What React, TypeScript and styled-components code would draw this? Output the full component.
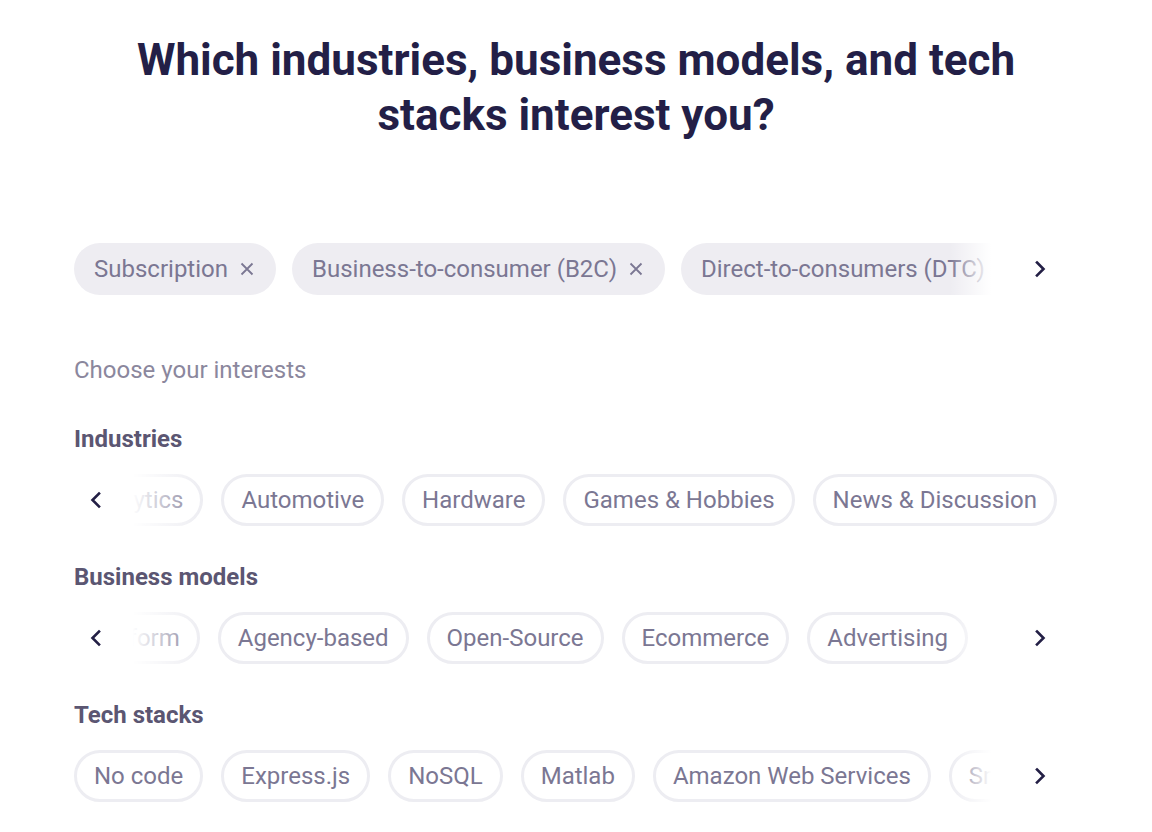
import styled, { createGlobalStyle } from "styled-components";

const GlobalStyle = createGlobalStyle`
  body {
    margin: 0;
    background: #ffffff;
    font-family: Roboto, "Liberation Sans", sans-serif;
  }
`;

const selected = ["Subscription", "Business-to-consumer (B2C)", "Direct-to-consumers (DTC)", "Marketplace"];

const groups = [
  {
    title: "Industries",
    items: ["Analytics", "Automotive", "Hardware", "Games & Hobbies", "News & Discussion"],
    align: "end",
    endGap: 1,
    left: true,
    right: false,
  },
  {
    title: "Business models",
    items: ["Platform", "Agency-based", "Open-Source", "Ecommerce", "Advertising"],
    align: "end",
    endGap: 90,
    left: true,
    right: true,
  },
  {
    title: "Tech stacks",
    items: ["No code", "Express.js", "NoSQL", "Matlab", "Amazon Web Services", "Smart contracts"],
    align: "start",
    endGap: 0,
    left: false,
    right: true,
  },
];

function Chevron({ dir }: { dir: "left" | "right" }) {
  return (
    <svg width="12" height="18" viewBox="0 0 12 18" fill="none">
      <path
        d={dir === "right" ? "M3 2.5 L9.5 9 L3 15.5" : "M9 2.5 L2.5 9 L9 15.5"}
        stroke="#231f45"
        strokeWidth="2.6"
        strokeLinecap="square"
      />
    </svg>
  );
}

function CloseIcon() {
  return (
    <svg width="14" height="14" viewBox="0 0 14 14" fill="none">
      <path d="M1.5 1.5 L12.5 12.5 M12.5 1.5 L1.5 12.5" stroke="#7b7793" strokeWidth="1.8" />
    </svg>
  );
}

export default function App() {
  return (
    <>
      <GlobalStyle />
      <Page>
        <Title>Which industries, business models, and tech stacks interest you?</Title>
        <Content>
          <Scroller>
            <Track $align="start" $endGap={0} $gap={16}>
              {selected.map((s) => (
                <SelectedChip key={s}>
                  {s}
                  <CloseIcon />
                </SelectedChip>
              ))}
            </Track>
            <Fade $side="right">
              <ArrowButton>
                <Chevron dir="right" />
              </ArrowButton>
            </Fade>
          </Scroller>

          <Hint>Choose your interests</Hint>

          {groups.map((g) => (
            <Group key={g.title}>
              <GroupTitle>{g.title}</GroupTitle>
              <Scroller>
                <Track $align={g.align} $endGap={g.endGap} $gap={18}>
                  {g.items.map((i) => (
                    <OptionChip key={i}>{i}</OptionChip>
                  ))}
                </Track>
                {g.left && (
                  <Fade $side="left">
                    <ArrowButton>
                      <Chevron dir="left" />
                    </ArrowButton>
                  </Fade>
                )}
                {g.right && (
                  <Fade $side="right">
                    <ArrowButton>
                      <Chevron dir="right" />
                    </ArrowButton>
                  </Fade>
                )}
              </Scroller>
            </Group>
          ))}
        </Content>
      </Page>
    </>
  );
}

const Page = styled.div`
  display: flex;
  flex-direction: column;
  align-items: center;
  padding-top: 33px;
  width: 1152px;
`;

const Title = styled.h1`
  color: #231f47;
  font-size: 44px;
  font-weight: 700;
  line-height: 55px;
  margin: 0;
  max-width: 940px;
  text-align: center;
`;

const Content = styled.div`
  align-self: flex-start;
  display: flex;
  flex-direction: column;
  margin: 100px 0 0 74px;
  width: 984px;
`;

const Scroller = styled.div`
  height: 52px;
  overflow: hidden;
  position: relative;
  width: 100%;
`;

const Track = styled.div<{ $align: string; $endGap: number; $gap: number }>`
  box-sizing: border-box;
  display: flex;
  gap: ${({ $gap }) => $gap}px;
  height: 100%;
  justify-content: ${({ $align }) => ($align === "end" ? "flex-end" : "flex-start")};
  padding-right: ${({ $endGap }) => $endGap}px;
  width: 100%;
`;

const SelectedChip = styled.div`
  align-items: center;
  background: #eeedf2;
  border-radius: 26px;
  box-sizing: border-box;
  color: #7b7793;
  display: flex;
  flex-shrink: 0;
  font-size: 24px;
  gap: 12px;
  height: 52px;
  padding: 0 22px 0 20px;
  white-space: nowrap;
`;

const OptionChip = styled.div`
  align-items: center;
  background: #ffffff;
  border: 3px solid #ededf2;
  border-radius: 26px;
  box-sizing: border-box;
  color: #7b7793;
  display: flex;
  flex-shrink: 0;
  font-size: 24px;
  height: 52px;
  padding: 0 17px;
  white-space: nowrap;
`;

const Fade = styled.div<{ $side: "left" | "right" }>`
  align-items: center;
  background: ${({ $side }) =>
    $side === "left"
      ? "linear-gradient(to right, #fff 0%, #fff 45%, rgba(255,255,255,0) 100%)"
      : "linear-gradient(to left, #fff 0%, #fff 62%, rgba(255,255,255,0) 100%)"};
  bottom: 0;
  box-sizing: border-box;
  display: flex;
  justify-content: ${({ $side }) => ($side === "left" ? "flex-start" : "flex-end")};
  padding-left: ${({ $side }) => ($side === "left" ? "4px" : "0")};
  position: absolute;
  top: 0;
  width: ${({ $side }) => ($side === "left" ? "130px" : "108px")};
  ${({ $side }) => ($side === "left" ? "left: 0;" : "right: 0;")}
`;

const ArrowButton = styled.button`
  align-items: center;
  background: none;
  border: 0;
  cursor: pointer;
  display: flex;
  height: 40px;
  justify-content: center;
  padding: 0;
  width: 36px;
`;

const Hint = styled.p`
  color: #8b879d;
  font-size: 24px;
  line-height: 28px;
  margin: 61px 0 41px 0;
`;

const Group = styled.section`
  display: flex;
  flex-direction: column;
  margin-bottom: 37px;
`;

const GroupTitle = styled.h3`
  color: #5b5672;
  font-size: 24px;
  font-weight: 700;
  line-height: 28px;
  margin: 0 0 21px 0;
`;
